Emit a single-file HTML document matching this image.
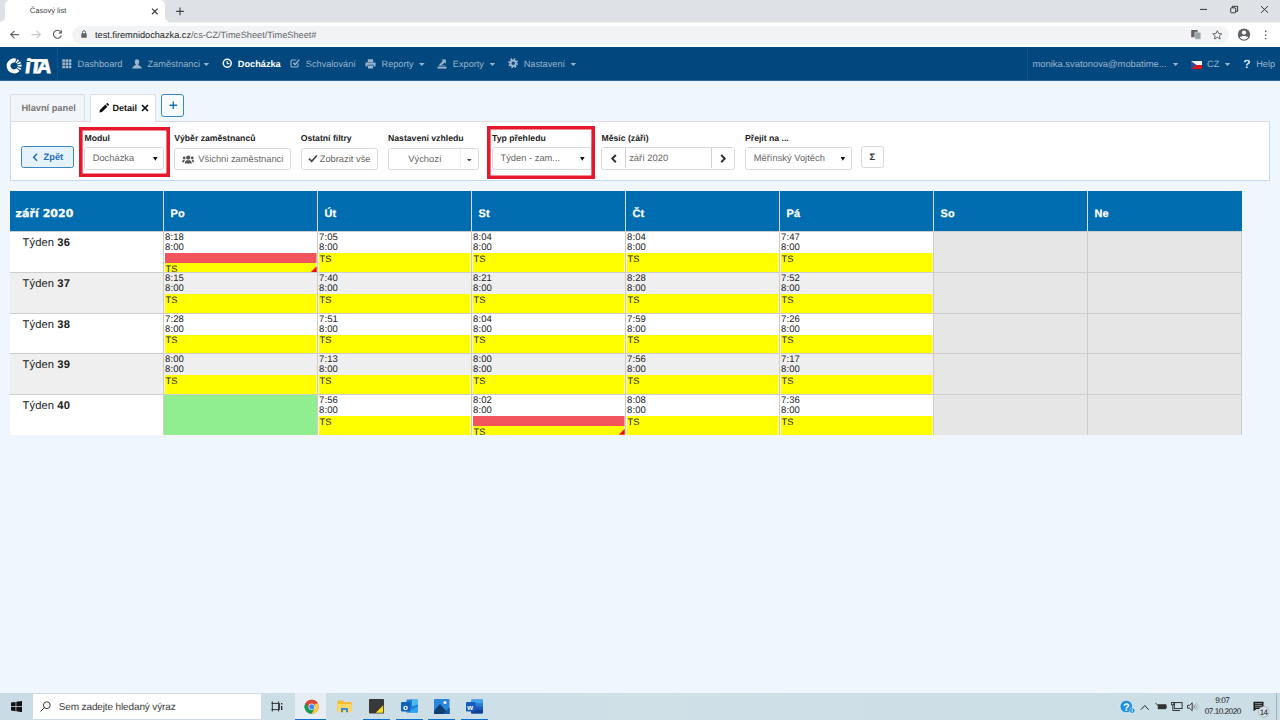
<!DOCTYPE html>
<html lang="cs">
<head>
<meta charset="utf-8">
<title>Časový list</title>
<style>
*{box-sizing:border-box;margin:0;padding:0}
html,body{width:1280px;height:720px;overflow:hidden}
body{position:relative;background:#eff6fd;text-rendering:geometricPrecision;font-family:"Liberation Sans",sans-serif;font-size:9.33px;color:#333}
.abs,svg.a{position:absolute}
i{font-style:normal}
#tabstrip{left:0;top:0;width:1280px;height:22px;background:#dee1e6}
#tab{left:5px;top:0;width:160px;height:22px;background:#fff;border-radius:5px 5px 0 0}
#tab span{position:absolute;left:24.700px;top:5.100px;font-size:7.600px;color:#3c4043;line-height:12px;white-space:nowrap}
#addr{left:0;top:22px;width:1280px;height:25px;background:#fff}
#url{left:72px;top:25.500px;width:1157px;height:18.500px;border-radius:9.250px;background:#f1f3f4}
#url span{position:absolute;left:23px;top:3.300px;font-size:9.200px;color:#202124;white-space:nowrap;line-height:13px}
#url span i{color:#5f6368}
#nav{left:0;top:47px;width:1280px;height:34px;background:#02487e;border-bottom:1px solid #316b97}
.nv{position:absolute;top:58.500px;font-size:9.200px;color:#9db4cb;white-space:nowrap;line-height:11px}
.nv.act{color:#fff;font-weight:bold}
.caret{position:absolute;width:5.600px;height:2.900px;background:#9db4cb;clip-path:polygon(0 0,100% 0,50% 100%)}
.ptab{position:absolute;font-size:8.670px;font-weight:bold;white-space:nowrap;line-height:10px}
#panel{left:10px;top:121px;width:1260px;height:60px;background:#fff;border:1px solid #c5daf0;border-top-color:#ddd}
.lbl{position:absolute;top:132.500px;font-size:8.670px;font-weight:bold;color:#222;white-space:nowrap;line-height:10px}
.ctl{position:absolute;top:148px;height:22px;background:#fff;border:1px solid #d8d8d8;border-radius:2.500px;font-size:9.330px;color:#666;white-space:nowrap;line-height:20px}
.ctl span{position:absolute;top:0}
.sel{position:absolute;top:8.500px;width:4.600px;height:3.800px;background:#111;clip-path:polygon(0 0,100% 0,50% 100%)}
.red{position:absolute;box-shadow:inset 0 0 0 3.600px #e8182c}
#thead{left:10px;top:191px;width:1232px;height:40.330px;background:#006db0}
.th{position:absolute;top:191px;height:40.330px;border-left:1px solid #d6dde3;color:#fff;font-weight:bold;font-size:10.900px;line-height:12px;padding-left:6.200px;padding-top:16.500px;letter-spacing:.25px;-webkit-text-stroke:.25px #fff}
.row{position:absolute;left:10px;width:1232px;height:40.670px}
.row:before{content:"";position:absolute;left:0;right:0;top:0;height:1px;background:#cdcdcd;z-index:2}
.wk{position:absolute;left:12.500px;top:6px;font-size:11.200px;color:#222;line-height:13px;letter-spacing:.1px;white-space:nowrap}
.c{position:absolute;top:0;height:40.670px;width:154px;border-left:1px solid #cdcdcd;font-size:9.500px;line-height:9.850px;color:#222}
.c .t{position:absolute;left:.800px;top:2px;white-space:nowrap;letter-spacing:.12px}
.c .y{position:absolute;left:.800px;right:0;top:21.900px;bottom:0;background:#ffff00;box-shadow:inset -1px 0 0 rgba(255,255,255,.45);padding-left:.600px;font-size:9.330px;line-height:11px;overflow:hidden;padding-top:.800px}
.c .r{position:absolute;left:.800px;right:0;top:21.900px;height:9.900px;background:#f2545c;box-shadow:inset -1px 0 0 rgba(255,255,255,.45)}
.c .y.lo{padding-top:10.800px}
.we{background:#e6e6e6}
.tri{position:absolute;right:.500px;bottom:0;width:5.800px;height:5.800px;background:#f00;clip-path:polygon(100% 0,100% 100%,0 100%)}
#task{left:0;top:693px;width:1280px;height:27px;background:linear-gradient(90deg,#c9dce5,#cfe0e7 50%,#cbdde5)}
</style>
</head>
<body>
<div id="tabstrip" class="abs"></div>
<div id="tab" class="abs"><span>Časový list</span></div>
<svg class="a" style="left:0;top:17px" width="172" height="5" viewBox="0 0 172 5"><path d="M0 5 A5 5 0 0 0 5 0 V5 Z M170 5 A5 5 0 0 1 165 0 V5 Z" fill="#fff"/></svg>
<svg class="a" style="left:150px;top:7px" width="10" height="9" viewBox="0 0 10 9"><path d="M2 1.600 L7.600 7.200 M7.600 1.600 L2 7.200" stroke="#3c4043" stroke-width="1.250" fill="none"/></svg>
<svg class="a" style="left:175px;top:6px" width="10" height="11" viewBox="0 0 10 11"><path d="M5 1.500 V9.300 M1.200 5.400 H8.800" stroke="#3c4043" stroke-width="1.100" fill="none"/></svg>
<svg class="a" style="left:1196px;top:4px" width="76" height="12" viewBox="0 0 76 12"><path d="M4 5.400 H11 M65 2.100 L72 8.800 M72 2.100 L65 8.800" stroke="#222" stroke-width="0.900" fill="none"/><rect x="34.700" y="3.800" width="5" height="5" rx="0.800" fill="none" stroke="#222" stroke-width="0.900"/><path d="M36.300 3.800 V2.300 H41.600 V7.300 H39.700" stroke="#222" stroke-width="0.900" fill="none"/></svg>
<div id="addr" class="abs"></div>
<div class="abs" style="left:165px;top:22px;width:1115px;height:1px;background:#eef0f2"></div>
<svg class="a" style="left:8px;top:28px" width="60" height="14" viewBox="0 0 60 14"><path d="M11 6.600 H3 M6.500 2.800 L2.700 6.600 L6.500 10.400" stroke="#5f6368" stroke-width="1.150" fill="none"/><path d="M23.500 6.600 H32 M28.500 2.800 L32.300 6.600 L28.500 10.400" stroke="#c4c7ca" stroke-width="1.150" fill="none"/><path d="M52.300 3.400 A4 4 0 1 0 53.300 7.500" stroke="#5f6368" stroke-width="1.150" fill="none"/><path d="M54 1.800 V5.600 H50.200 Z" fill="#5f6368"/></svg>
<div id="url" class="abs"><span>test.firemnidochazka.cz<i>/cs-CZ/TimeSheet/TimeSheet#</i></span></div>
<svg class="a" style="left:80px;top:29px" width="8" height="10" viewBox="0 0 8 10"><rect x="1.300" y="4.200" width="5.400" height="4.600" rx="0.500" fill="#5f6368"/><path d="M2.500 4.500 V3.200 A1.500 1.500 0 0 1 5.500 3.200 V4.500" stroke="#5f6368" stroke-width="0.900" fill="none"/></svg>
<svg class="a" style="left:1188px;top:27px" width="84" height="15" viewBox="0 0 84 15"><rect x="3.200" y="3" width="6.500" height="7.300" rx="0.600" fill="#5f6368"/><rect x="6.800" y="5.200" width="6" height="7" rx="0.600" fill="#9aa0a6" stroke="#f1f3f4" stroke-width="0.500"/><path d="M29.300 3.600 L30.600 6.500 L33.800 6.800 L31.400 8.900 L32.100 12 L29.300 10.300 L26.500 12 L27.200 8.900 L24.800 6.800 L28 6.500 Z" stroke="#5f6368" stroke-width="0.950" fill="none"/><circle cx="56" cy="7.600" r="6.200" fill="#5f6368"/><circle cx="56" cy="5.600" r="2.100" fill="#fff"/><path d="M51.800 10.600 C53 8.600 59 8.600 60.200 10.600 A5.200 5.200 0 0 1 51.800 10.600 Z" fill="#fff"/><circle cx="77.700" cy="4.200" r="0.850" fill="#5f6368"/><circle cx="77.700" cy="8.100" r="0.850" fill="#5f6368"/><circle cx="77.700" cy="11.500" r="0.850" fill="#5f6368"/></svg>
<div id="nav" class="abs"></div>
<div class="abs" style="left:57px;top:48px;width:1px;height:32px;background:#0d5590"></div>
<div class="abs" style="left:1027px;top:48px;width:1px;height:32px;background:#0d5590"></div>
<svg class="a" style="left:5px;top:56px" width="48" height="19" viewBox="0 0 48 19"><circle cx="9.100" cy="9.900" r="5.500" fill="none" stroke="#fff" stroke-width="4" stroke-dasharray="22.080 1 1.500 1 1.500 1 1.500 1 1.500 1 1.500" transform="rotate(50 9.100 9.900)"/><text transform="translate(19.400 17.200) skewX(-7)" x="0 4.600 12" y="0" font-family="Liberation Sans,sans-serif" font-weight="bold" font-size="19.800" fill="#fff" stroke="#fff" stroke-width="0.900">iTA</text></svg>
<svg class="a" style="left:62px;top:59px" width="10" height="10" viewBox="0 0 10 10"><g fill="#9db4cb"><rect x="0.300" y="0.300" width="2.600" height="2.600"/><rect x="3.500" y="0.300" width="2.600" height="2.600"/><rect x="6.700" y="0.300" width="2.600" height="2.600"/><rect x="0.300" y="3.500" width="2.600" height="2.600"/><rect x="3.500" y="3.500" width="2.600" height="2.600"/><rect x="6.700" y="3.500" width="2.600" height="2.600"/><rect x="0.300" y="6.700" width="2.600" height="2.600"/><rect x="3.500" y="6.700" width="2.600" height="2.600"/><rect x="6.700" y="6.700" width="2.600" height="2.600"/></g></svg>
<div class="nv" style="left:77.500px">Dashboard</div>
<svg class="a" style="left:132px;top:58.500px" width="10" height="10" viewBox="0 0 10 10"><path d="M5 0.300 C6.600 0.300 7.300 1.500 7.200 3 C7.100 4.500 6.400 5.300 6.200 5.800 C6.200 6.600 9.700 7 9.700 9.500 H0.300 C0.300 7 3.800 6.600 3.800 5.800 C3.600 5.300 2.900 4.500 2.800 3 C2.700 1.500 3.400 0.300 5 0.300 Z" fill="#9db4cb"/></svg>
<div class="nv" style="left:147.500px">Zaměstnanci</div>
<div class="caret" style="left:203.500px;top:63px"></div>
<svg class="a" style="left:221.500px;top:58.300px" width="10.500" height="10.500" viewBox="0 0 10.500 10.500"><circle cx="5.250" cy="5.250" r="4" fill="none" stroke="#fff" stroke-width="1.500"/><path d="M5.200 2.900 V5.600 H7.300" stroke="#fff" stroke-width="1.100" fill="none"/></svg>
<div class="nv act" style="left:237.800px">Docházka</div>
<svg class="a" style="left:290px;top:57.800px" width="10.500" height="10" viewBox="0 0 10.500 10"><path d="M8 5.300 V7.700 A1.300 1.300 0 0 1 6.700 9 H2.300 A1.300 1.300 0 0 1 1 7.700 V3.300 A1.300 1.300 0 0 1 2.300 2 H6.300" stroke="#9db4cb" stroke-width="1.100" fill="none"/><path d="M3.300 4.800 L5 6.600 L9.300 1.600" stroke="#9db4cb" stroke-width="1.400" fill="none"/></svg>
<div class="nv" style="left:305.800px">Schvalování</div>
<svg class="a" style="left:365px;top:58.500px" width="11" height="10" viewBox="0 0 11 10"><path d="M2.800 0.300 H8.200 V3 H2.800 Z M0.500 3.600 H10.500 V7.600 H8.600 V5.800 H2.400 V7.600 H0.500 Z M3 6.400 H8 V9.500 H3 Z" fill="#9db4cb"/></svg>
<div class="nv" style="left:381.500px">Reporty</div>
<div class="caret" style="left:419px;top:63px"></div>
<svg class="a" style="left:437px;top:58.500px" width="10" height="10" viewBox="0 0 10 10"><path d="M0.500 7.800 H9.500 V9.600 H0.500 Z" fill="#9db4cb"/><path d="M4.500 0.500 H8.800 V4.800 L7.400 3.400 L4.600 6.200 H2.200 V5.800 L5.900 1.900 Z" fill="#9db4cb"/><path d="M1.500 6.800 H8.500" stroke="#9db4cb" stroke-width="0.700"/></svg>
<div class="nv" style="left:452.800px">Exporty</div>
<div class="caret" style="left:489.600px;top:63px"></div>
<svg class="a" style="left:507.500px;top:58px" width="10.400" height="10.400" viewBox="0 0 10.400 10.400"><circle cx="5.200" cy="5.200" r="2.700" fill="none" stroke="#9db4cb" stroke-width="2"/><circle cx="5.200" cy="5.200" r="4.200" fill="none" stroke="#9db4cb" stroke-width="1.700" stroke-dasharray="1.650 1.650"/></svg>
<div class="nv" style="left:523.700px">Nastavení</div>
<div class="caret" style="left:570.500px;top:63px"></div>
<div class="nv" style="left:1032.500px;top:58px;font-size:9.400px">monika.svatonova@mobatime...</div>
<div class="caret" style="left:1172.800px;top:63px"></div>
<svg class="a" style="left:1191px;top:60.500px" width="11" height="8" viewBox="0 0 11 8"><rect width="11" height="4" fill="#f4f4f4"/><rect y="4" width="11" height="4" fill="#d7141a"/><path d="M0 0 L5.500 4 L0 8 Z" fill="#2b4a9b"/></svg>
<div class="nv" style="left:1207px">CZ</div>
<div class="caret" style="left:1224.700px;top:63px"></div>
<div class="nv" style="left:1243.300px;top:58.300px;font-size:12px;line-height:12px;font-weight:bold;color:#dde6ef">?</div>
<div class="nv" style="left:1256.200px">Help</div>
<div class="abs" style="left:10px;top:94px;width:75px;height:27.500px;background:#f2f6fa;border:1px solid #ddd;border-bottom:none;border-radius:2.500px 2.500px 0 0"></div>
<div class="ptab" style="left:21.400px;top:103px;color:#777;font-size:9.250px">Hlavní panel</div>
<div id="panel" class="abs"></div>
<div class="abs" style="left:90px;top:94px;width:66px;height:28px;background:#fff;border:1px solid #ddd;border-bottom:none;border-radius:2.500px 2.500px 0 0"></div>
<svg class="a" style="left:99px;top:103px" width="10" height="10" viewBox="0 0 10 10"><path d="M0.400 9.600 L0.900 7 L6.300 1.600 L8.400 3.700 L3 9.100 Z M7 0.900 L7.800 0.200 C8.200 -0.100 8.500 0 8.800 0.300 L9.700 1.200 C10 1.500 10 1.900 9.800 2.200 L9.100 3 Z" fill="#111"/></svg>
<div class="ptab" style="left:112.500px;top:103px;color:#111;font-size:9.050px">Detail</div>
<svg class="a" style="left:140.700px;top:103.800px" width="8" height="8" viewBox="0 0 8 8"><path d="M1 1 L7 7 M7 1 L1 7" stroke="#111" stroke-width="1.700" fill="none"/></svg>
<div class="abs" style="left:161px;top:94px;width:22.500px;height:22.500px;background:#f7fbfe;border:1px solid #3a87c8;border-radius:3px"></div>
<svg class="a" style="left:168.500px;top:101px" width="9" height="9" viewBox="0 0 9 9"><path d="M4.300 0.500 V8.100 M0.500 4.300 H8.100" stroke="#1b6fb6" stroke-width="1.400" fill="none"/></svg>
<div class="ctl" style="left:20.500px;top:146px;width:53.500px;height:22px;border-color:#3a87c8;color:#1b6fb6;font-weight:bold;background:#e6f2fb;line-height:20.500px"><svg class="a" style="left:10.500px;top:6.300px" width="7" height="9" viewBox="0 0 7 9"><path d="M5 0.800 L1.700 4.300 L5 7.800" stroke="#1b6fb6" stroke-width="1.500" fill="none"/></svg><span style="left:22px">Zpět</span></div>
<div class="lbl" style="left:84.500px">Modul</div>
<div class="ctl" style="left:84px;top:147px;width:80px;height:23px;line-height:21px"><span style="left:7.700px">Docházka</span><i class="sel" style="left:68px;top:9px"></i></div>
<div class="lbl" style="left:174.200px">Výběr zaměstnanců</div>
<div class="ctl" style="left:174px;width:116.600px"><svg class="a" style="left:6.500px;top:5.600px" width="12.500" height="9" viewBox="0 0 12.500 9"><g fill="#555"><circle cx="6.250" cy="2.600" r="2.100"/><path d="M2.800 8.600 C2.800 5.700 4.500 5.300 6.250 5.300 C8 5.300 9.700 5.700 9.700 8.600 Z"/><circle cx="2.200" cy="3" r="1.400"/><circle cx="10.300" cy="3" r="1.400"/><path d="M0 7.200 C0 5.200 1.200 4.800 2.900 5 C2.300 5.700 2.100 6.400 2.100 7.200 Z M12.500 7.200 C12.500 5.200 11.300 4.800 9.600 5 C10.200 5.700 10.400 6.400 10.400 7.200 Z"/></g></svg><span style="left:23.300px">Všichni zaměstnanci</span></div>
<div class="lbl" style="left:300.700px">Ostatní filtry</div>
<div class="ctl" style="left:300.500px;width:77.300px"><svg class="a" style="left:6.300px;top:5.300px" width="10" height="9" viewBox="0 0 10 9"><path d="M1 4.600 L3.700 7.300 L8.900 1.500" stroke="#444" stroke-width="1.700" fill="none"/></svg><span style="left:18.200px">Zobrazit vše</span></div>
<div class="lbl" style="left:388px">Nastavení vzhledu</div>
<div class="ctl" style="left:388px;width:91px"><span style="left:19.300px">Výchozí</span><i style="position:absolute;left:70.500px;top:0;width:1px;height:19px;background:#ececec"></i><i class="caret" style="left:77.500px;top:9.500px;background:#444"></i></div>
<div class="lbl" style="left:492px">Typ přehledu</div>
<div class="ctl" style="left:491.500px;top:147px;width:100px;height:23px;line-height:21px"><span style="left:8px">Týden - zam...</span><i class="sel" style="left:87.500px;top:9px"></i></div>
<div class="lbl" style="left:601.500px">Měsíc (září)</div>
<div class="ctl" style="left:601px;top:147px;width:134px;height:23px;line-height:21px"><i style="position:absolute;left:22.500px;top:0;width:1px;height:20px;background:#d0d0d0"></i><i style="position:absolute;left:109px;top:0;width:1px;height:20px;background:#d0d0d0"></i><svg class="a" style="left:7.500px;top:6px" width="8" height="10" viewBox="0 0 8 10"><path d="M5.800 1 L2.300 4.600 L5.800 8.200" stroke="#333" stroke-width="2" fill="none"/></svg><span style="left:27.200px">září 2020</span><svg class="a" style="left:117px;top:6px" width="8" height="10" viewBox="0 0 8 10"><path d="M2.200 1 L5.700 4.600 L2.200 8.200" stroke="#333" stroke-width="2" fill="none"/></svg></div>
<div class="lbl" style="left:745px">Přejít na ...</div>
<div class="ctl" style="left:744.500px;top:147px;width:107px;height:23px;line-height:21px"><span style="left:8.300px">Měřínský Vojtěch</span><i class="sel" style="left:95px;top:9px"></i></div>
<div class="ctl" style="left:861px;top:146px;width:22.500px;height:22px;color:#333;font-weight:bold;text-align:center;line-height:20px">Σ</div>
<div class="red" style="left:79px;top:127px;width:90.500px;height:50px"></div>
<div class="red" style="left:487.300px;top:126px;width:107.800px;height:52.700px"></div>
<div id="thead" class="abs"></div>
<div class="th" style="left:10px;border-left:none;padding-left:5.600px;padding-top:16.700px;font-family:DejaVu Sans,Liberation Sans,sans-serif;font-size:10.900px;letter-spacing:.1px;-webkit-text-stroke:.3px #fff">září 2020</div>
<div class="th" style="left:163.2px">Po</div>
<div class="th" style="left:317.2px">Út</div>
<div class="th" style="left:471.2px">St</div>
<div class="th" style="left:625.2px">Čt</div>
<div class="th" style="left:779.2px">Pá</div>
<div class="th" style="left:933.2px">So</div>
<div class="th" style="left:1087.2px">Ne</div>
<div class="row" style="top:231.33px;background:#fff"><div class="wk">Týden <b>36</b></div><div class="c" style="left:153.2px"><div class="t">8:18<br>8:00</div><div class="y lo">TS</div><div class="r"></div><i class="tri"></i></div><div class="c" style="left:307.2px"><div class="t">7:05<br>8:00</div><div class="y">TS</div></div><div class="c" style="left:461.2px"><div class="t">8:04<br>8:00</div><div class="y">TS</div></div><div class="c" style="left:615.2px"><div class="t">8:04<br>8:00</div><div class="y">TS</div></div><div class="c" style="left:769.2px"><div class="t">7:47<br>8:00</div><div class="y">TS</div></div><div class="c we" style="left:923.2px"></div><div class="c we" style="left:1077.2px"></div></div>
<div class="row" style="top:272.00px;background:#efefef"><div class="wk">Týden <b>37</b></div><div class="c" style="left:153.2px"><div class="t">8:15<br>8:00</div><div class="y">TS</div></div><div class="c" style="left:307.2px"><div class="t">7:40<br>8:00</div><div class="y">TS</div></div><div class="c" style="left:461.2px"><div class="t">8:21<br>8:00</div><div class="y">TS</div></div><div class="c" style="left:615.2px"><div class="t">8:28<br>8:00</div><div class="y">TS</div></div><div class="c" style="left:769.2px"><div class="t">7:52<br>8:00</div><div class="y">TS</div></div><div class="c we" style="left:923.2px"></div><div class="c we" style="left:1077.2px"></div></div>
<div class="row" style="top:312.67px;background:#fff"><div class="wk">Týden <b>38</b></div><div class="c" style="left:153.2px"><div class="t">7:28<br>8:00</div><div class="y">TS</div></div><div class="c" style="left:307.2px"><div class="t">7:51<br>8:00</div><div class="y">TS</div></div><div class="c" style="left:461.2px"><div class="t">8:04<br>8:00</div><div class="y">TS</div></div><div class="c" style="left:615.2px"><div class="t">7:59<br>8:00</div><div class="y">TS</div></div><div class="c" style="left:769.2px"><div class="t">7:26<br>8:00</div><div class="y">TS</div></div><div class="c we" style="left:923.2px"></div><div class="c we" style="left:1077.2px"></div></div>
<div class="row" style="top:353.34px;background:#efefef"><div class="wk">Týden <b>39</b></div><div class="c" style="left:153.2px"><div class="t">8:00<br>8:00</div><div class="y">TS</div></div><div class="c" style="left:307.2px"><div class="t">7:13<br>8:00</div><div class="y">TS</div></div><div class="c" style="left:461.2px"><div class="t">8:00<br>8:00</div><div class="y">TS</div></div><div class="c" style="left:615.2px"><div class="t">7:56<br>8:00</div><div class="y">TS</div></div><div class="c" style="left:769.2px"><div class="t">7:17<br>8:00</div><div class="y">TS</div></div><div class="c we" style="left:923.2px"></div><div class="c we" style="left:1077.2px"></div></div>
<div class="row" style="top:394.01px;background:#fff"><div class="wk">Týden <b>40</b></div><div class="c" style="left:153.2px"><div style="position:absolute;left:0;top:0;right:0;bottom:0;background:#90ee90"></div></div><div class="c" style="left:307.2px"><div class="t">7:56<br>8:00</div><div class="y">TS</div></div><div class="c" style="left:461.2px"><div class="t">8:02<br>8:00</div><div class="y lo">TS</div><div class="r"></div><i class="tri"></i></div><div class="c" style="left:615.2px"><div class="t">8:08<br>8:00</div><div class="y">TS</div></div><div class="c" style="left:769.2px"><div class="t">7:36<br>8:00</div><div class="y">TS</div></div><div class="c we" style="left:923.2px"></div><div class="c we" style="left:1077.2px"></div></div>
<div class="abs" style="left:1241px;top:231px;width:1px;height:203.700px;background:#cfcfcf"></div>
<div id="task" class="abs"></div>
<svg class="a" style="left:10.500px;top:700.800px" width="11" height="11.200" viewBox="0 0 11 11.200"><path d="M0 1.600 L4.600 0.950 V5.200 H0 Z M5.300 0.850 L11 0 V5.200 H5.300 Z M0 5.900 H4.600 V10.200 L0 9.550 Z M5.300 5.900 H11 V11.200 L5.300 10.300 Z" fill="#111"/></svg>
<div class="abs" style="left:32.500px;top:694px;width:228px;height:25px;background:#fff"></div>
<svg class="a" style="left:40px;top:701px" width="11" height="11" viewBox="0 0 11 11"><circle cx="6.800" cy="4.200" r="3.400" fill="none" stroke="#222" stroke-width="0.900"/><path d="M4.400 6.600 L0.500 10.500" stroke="#222" stroke-width="0.950"/></svg>
<div class="abs" style="left:58.800px;top:700.700px;font-size:10px;line-height:13px;color:#3a3a3a;white-space:nowrap;letter-spacing:-.13px" id="srch">Sem zadejte hledaný výraz</div>
<svg class="a" style="left:271px;top:701px" width="12" height="11" viewBox="0 0 12 11"><path d="M1.300 0.500 V10.500 M0.500 2.400 H8.400 V8.600 H0.500 M7.600 0.500 V10.500" stroke="#222" stroke-width="0.900" fill="none"/><rect x="10" y="2" width="1.300" height="1.500" fill="#222"/><rect x="10" y="5" width="1.300" height="4" fill="#222"/></svg>
<div class="abs" style="left:295px;top:693.300px;width:31px;height:26.700px;background:#e6eef3"></div>
<div class="abs" style="left:295px;top:718.600px;width:31px;height:1.400px;background:#0a6fd0"></div>
<svg class="a" style="left:303.700px;top:698.700px" width="15.400" height="15.400" viewBox="0 0 48 48"><circle cx="24" cy="24" r="22" fill="#db4437"/><path d="M24 24 L4.950 35 A22 22 0 0 0 24 46 L35 28 Z" fill="#0f9d58"/><path d="M24 24 L4.950 35 A22 22 0 0 1 4.950 13 Z" fill="#0f9d58"/><path d="M4.950 13 A22 22 0 0 0 4.950 35 L14.500 29.500 L13 18 Z" fill="#0f9d58"/><path d="M43.050 13 A22 22 0 0 1 24 46 L33.500 29.500 L35 14 Z" fill="#ffcd40"/><path d="M24 14 H43.500 A22 22 0 0 0 4.950 13 L14 27 Z" fill="#db4437"/><circle cx="24" cy="24" r="10" fill="#f1f1f1"/><circle cx="24" cy="24" r="8" fill="#4285f4"/></svg>
<svg class="a" style="left:336.500px;top:700px" width="15" height="13" viewBox="0 0 15 13"><path d="M0.500 1.500 A1 1 0 0 1 1.500 0.500 H5.500 L7 2 H13.500 A1 1 0 0 1 14.500 3 V11.500 H0.500 Z" fill="#f5b82e"/><path d="M0.500 4 H14.500 V11.500 A0.800 0.800 0 0 1 13.700 12.300 H1.300 A0.800 0.800 0 0 1 0.500 11.500 Z" fill="#ffd766"/><path d="M4 8 H11 V12.300 H9 V10 H6 V12.300 H4 Z" fill="#3b8ed8"/></svg>
<svg class="a" style="left:369px;top:699.300px" width="15" height="15" viewBox="0 0 15 15"><rect width="15" height="14.600" rx="0.800" fill="#383838"/><path d="M14.200 6.200 V13.800 H6.800 Z" fill="#ffd91a"/></svg>
<svg class="a" style="left:400.500px;top:699px" width="17.500" height="15" viewBox="0 0 17.500 15"><rect x="5.500" y="0.500" width="11.500" height="13" rx="1" fill="#1a7fd6"/><path d="M5.500 7 L11.200 10.500 L17 7 V12.500 A1 1 0 0 1 16 13.500 H5.500 Z" fill="#2ea3ef"/><path d="M11 0.500 H17 V5.500 L11 7.500 Z" fill="#50b8f5"/><rect x="0" y="3" width="9.500" height="9.500" rx="1" fill="#0f62b8"/><text x="2" y="10.700" font-family="Liberation Sans,sans-serif" font-weight="bold" font-size="8" fill="#fff">o</text></svg>
<svg class="a" style="left:434px;top:699px" width="15.500" height="15" viewBox="0 0 15.500 15"><rect width="15.500" height="15" rx="0.800" fill="#2a86d8"/><path d="M0 12 L6 5 L12 12 L15.500 9 V14.200 A0.800 0.800 0 0 1 14.700 15 H0.800 A0.800 0.800 0 0 1 0 14.200 Z" fill="#0e3f74"/><path d="M9 15 L15.500 8.500 V15 Z" fill="#1c5c9e"/><circle cx="11" cy="3.600" r="1.500" fill="#fff"/></svg>
<svg class="a" style="left:466px;top:699px" width="17.500" height="15" viewBox="0 0 17.500 15"><rect x="5" y="0.500" width="12" height="14" rx="1" fill="#2b7cd3"/><rect x="5" y="0.500" width="12" height="3.600" fill="#41a5ee"/><rect x="5" y="7.600" width="12" height="3.500" fill="#185abd"/><rect x="5" y="11.100" width="12" height="3.400" rx="1" fill="#103f91"/><rect x="0" y="3" width="9.500" height="9.500" rx="1" fill="#185abd"/><text x="1.200" y="10.600" font-family="Liberation Sans,sans-serif" font-weight="bold" font-size="7.500" fill="#fff">w</text></svg>
<div class="abs" style="left:363px;top:718.600px;width:27.0px;height:1.400px;background:#0a6fd0"></div>
<div class="abs" style="left:395.8px;top:718.600px;width:26.8px;height:1.400px;background:#0a6fd0"></div>
<div class="abs" style="left:428.3px;top:718.600px;width:26.7px;height:1.400px;background:#0a6fd0"></div>
<div class="abs" style="left:461.2px;top:718.600px;width:26.8px;height:1.400px;background:#0a6fd0"></div>
<svg class="a" style="left:1119px;top:700px" width="17" height="14" viewBox="0 0 17 14"><circle cx="7.300" cy="6.500" r="6.300" fill="#1e8fe0" stroke="#fff" stroke-width="0.600"/><text x="4" y="10.500" font-family="Liberation Sans,sans-serif" font-weight="bold" font-size="11" fill="#fff">?</text><circle cx="13.200" cy="10.600" r="2.700" fill="#1e8fe0" stroke="#fff" stroke-width="0.500"/><rect x="12.800" y="9.200" width="0.800" height="2.900" fill="#fff"/></svg>
<svg class="a" style="left:1140px;top:703.500px" width="10" height="7" viewBox="0 0 10 7"><path d="M0.900 5.700 L4.800 1.500 L8.700 5.700" stroke="#222" stroke-width="1" fill="none"/></svg>
<svg class="a" style="left:1154.500px;top:702px" width="12" height="9" viewBox="0 0 12 9"><rect x="2.800" y="2.200" width="8.400" height="5" fill="#333"/><path d="M0.500 1.200 C1.800 1.200 1.800 3.500 3 3.500" stroke="#222" stroke-width="0.900" fill="none"/><rect x="11.200" y="3.500" width="0.800" height="2.300" fill="#333"/></svg>
<svg class="a" style="left:1170.500px;top:702px" width="12" height="10" viewBox="0 0 12 10"><rect x="3.300" y="0.600" width="7.800" height="6" fill="none" stroke="#222" stroke-width="0.900"/><rect x="0.500" y="0.500" width="2.500" height="2.300" fill="none" stroke="#222" stroke-width="0.800"/><path d="M1.800 3 V8.500 H7 M5 8.500 H9" stroke="#222" stroke-width="0.900" fill="none"/></svg>
<svg class="a" style="left:1187px;top:702px" width="12" height="10" viewBox="0 0 12 10"><path d="M0.500 3.300 H2.600 L5.200 0.800 V8.700 L2.600 6.200 H0.500 Z" fill="none" stroke="#222" stroke-width="0.850"/><path d="M6.700 3.300 A2 2 0 0 1 6.700 6.200" stroke="#444" stroke-width="0.700" fill="none"/><path d="M8.100 2 A4 4 0 0 1 8.100 7.500" stroke="#888" stroke-width="0.600" fill="none"/><path d="M9.600 0.900 A6 6 0 0 1 9.600 8.600" stroke="#aaa" stroke-width="0.600" fill="none"/></svg>
<div class="abs" style="left:1215.300px;top:695.500px;font-size:8.200px;line-height:10px;color:#222;letter-spacing:-.45px;white-space:nowrap">9:07</div>
<div class="abs" style="left:1204.800px;top:707.300px;font-size:8.200px;line-height:10px;color:#222;letter-spacing:-.5px;white-space:nowrap">07.10.2020</div>
<svg class="a" style="left:1252.500px;top:700.500px" width="18" height="17" viewBox="0 0 18 17"><path d="M0.500 0.700 H10.500 V8 H3.500 L0.500 10.300 Z" fill="#1a1a1a"/><path d="M2 2.600 H9 M2 4.400 H9 M2 6.200 H9" stroke="#cddde6" stroke-width="0.600"/><circle cx="10.800" cy="10.800" r="5.400" fill="#d6e0e6" stroke="#8a9499" stroke-width="0.500"/><text x="6.700" y="13.700" font-family="Liberation Sans,sans-serif" font-size="8" fill="#111" letter-spacing="-0.700">14</text></svg>
<div class="abs" style="left:1276.300px;top:693.300px;width:.7px;height:26.700px;background:#9fb0ba"></div>
</body>
</html>
